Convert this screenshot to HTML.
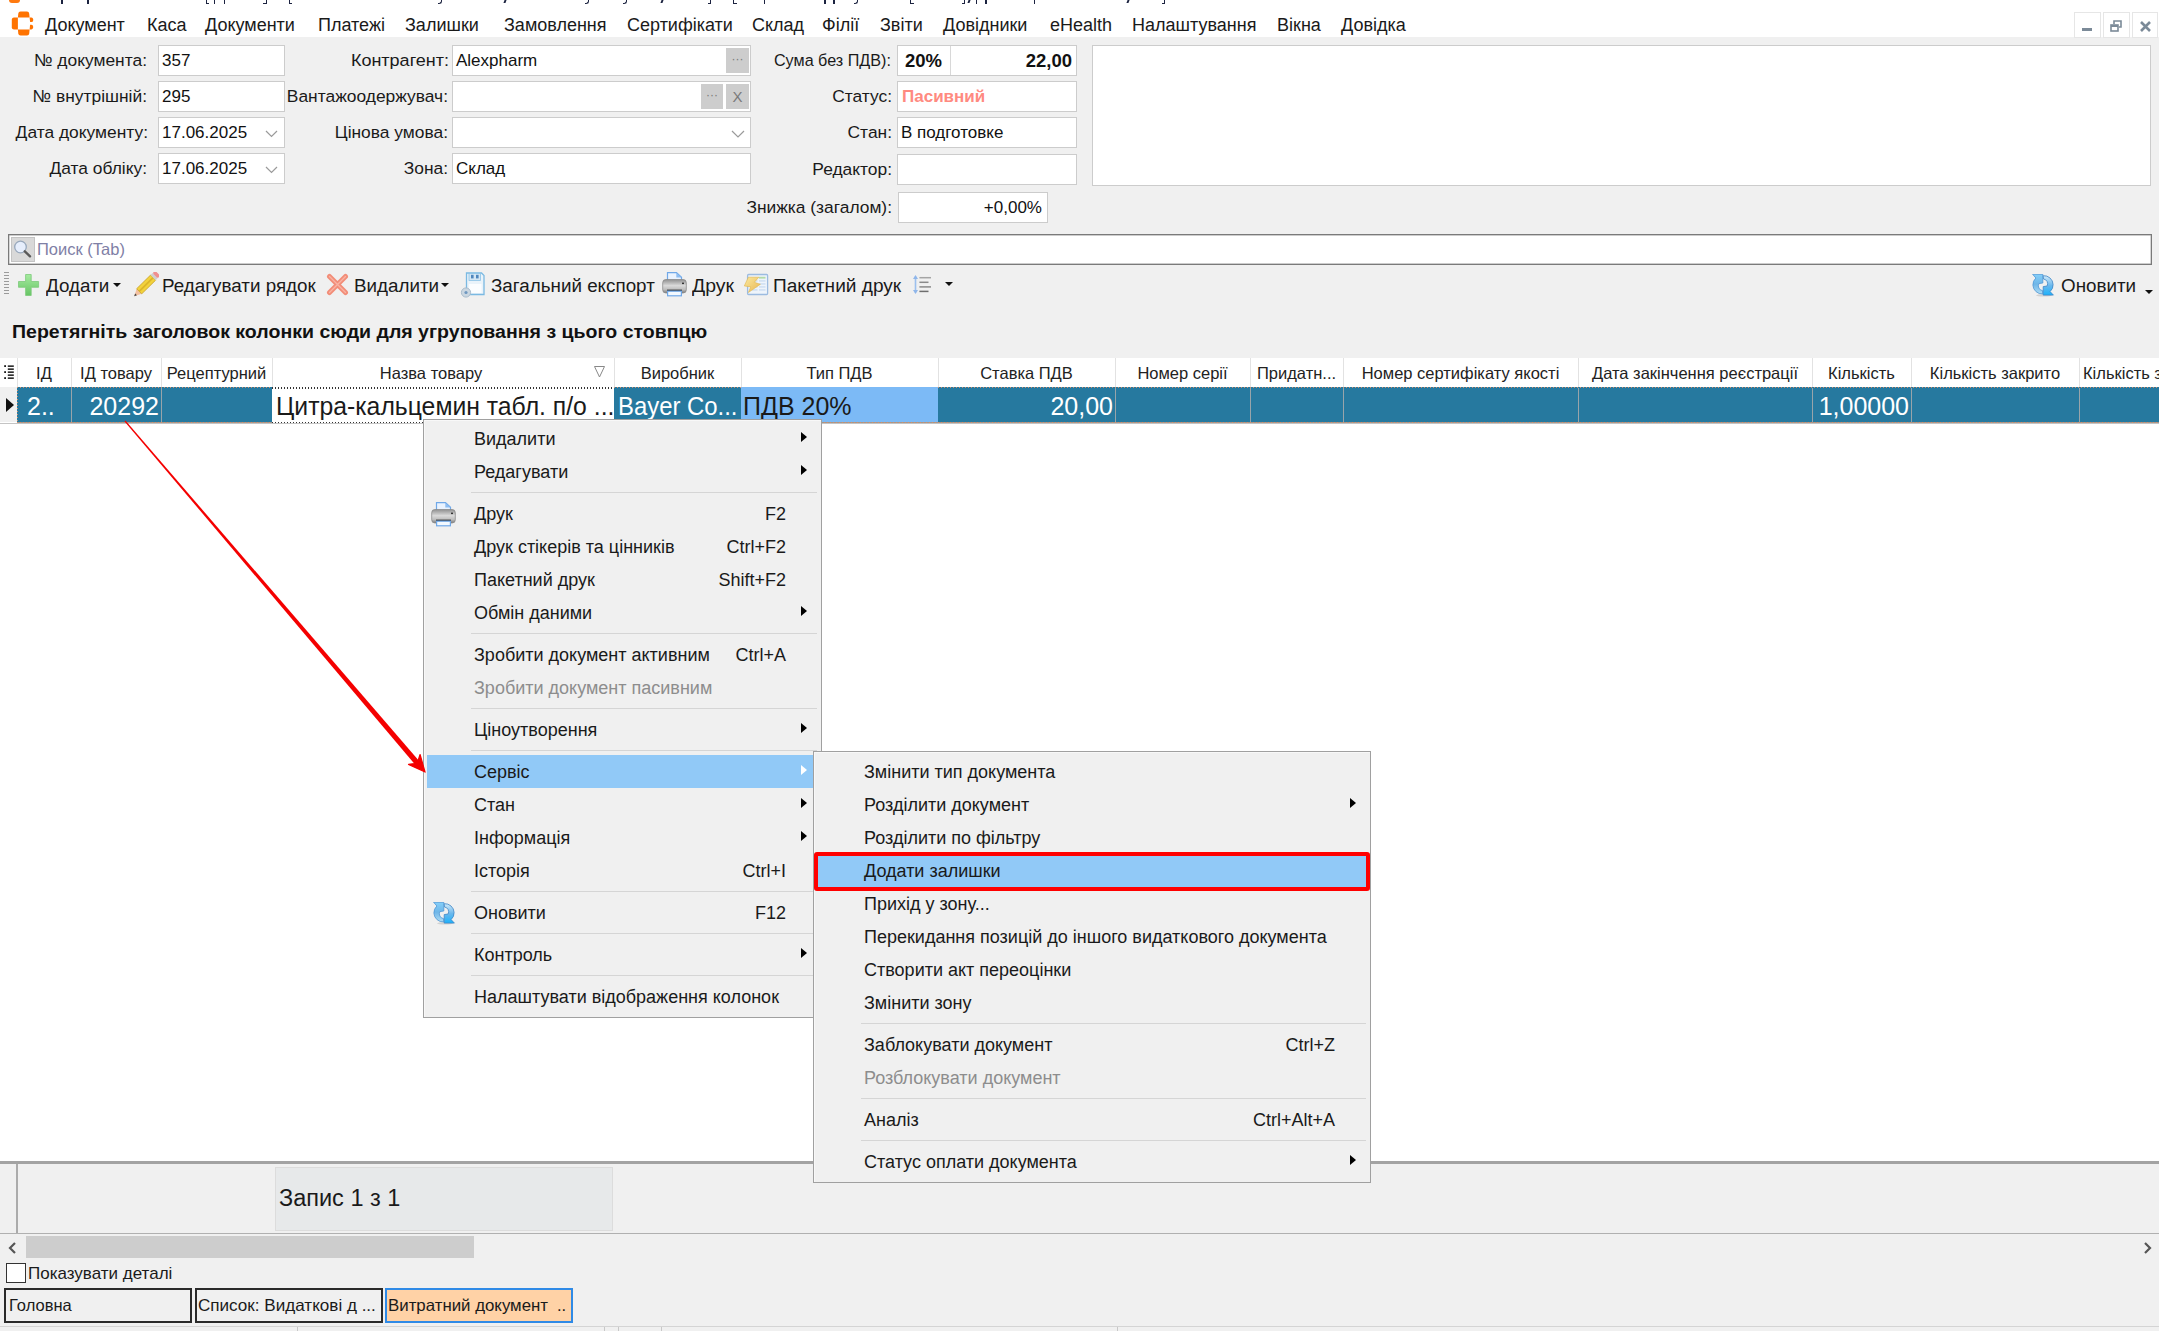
<!DOCTYPE html>
<html><head><meta charset="utf-8">
<style>
*{box-sizing:border-box}
html,body{margin:0;padding:0}
body{width:2159px;height:1331px;overflow:hidden;background:#f0f0f0;font-family:"Liberation Sans",sans-serif;color:#000;position:relative}
.a{position:absolute}
.t{position:absolute;white-space:nowrap}
.mb{font-size:18px;top:9px;line-height:32px;color:#1a1a1a}
.lb{font-size:17.4px;text-align:right;line-height:31px;color:#1a1a1a}
.inp{position:absolute;background:#fff;border:1px solid #cccccc;font-size:17px;line-height:29px;padding-left:3px;white-space:nowrap;color:#111}
.gbtn{position:absolute;background:#cdcdcd;color:#7a7a7a;font-size:12px;text-align:center;line-height:20px}
.tb{font-size:18px;line-height:30px;top:271px;color:#1a1a1a;transform:scaleX(1.045);transform-origin:0 0}
.hd{font-size:16.5px;line-height:28px;top:359px;text-align:center;color:#222}
.cm{font-size:18px;line-height:35px;color:#1a1a1a}
.sc{font-size:18px;line-height:35px;color:#1a1a1a;text-align:right}
.sep{position:absolute;height:1px;background:#d5d5d5}
.arr{position:absolute;width:0;height:0;border-top:5.5px solid transparent;border-bottom:5.5px solid transparent;border-left:6.5px solid #000}
</style></head><body>
<!-- top white bar -->
<div class="a" style="left:0;top:0;width:2159px;height:37px;background:#fff"></div>
<!-- title remnants -->
<div class="a" style="left:9px;top:0;width:11px;height:3px;background:#ff7a10;border-radius:0 0 4px 4px"></div>
<div class="a" style="left:61.0px;top:0;width:1.6px;height:4px;background:#1c2340"></div><div class="a" style="left:87.0px;top:0;width:1.6px;height:4px;background:#1c2340"></div><div class="a" style="left:213.8px;top:0;width:1.6px;height:4px;background:#1c2340"></div><div class="a" style="left:223.5px;top:0;width:1.6px;height:4px;background:#1c2340"></div><div class="a" style="left:763.8px;top:0;width:1.6px;height:4px;background:#1c2340"></div><div class="a" style="left:824.2px;top:0;width:1.6px;height:4px;background:#1c2340"></div><div class="a" style="left:833.2px;top:0;width:1.6px;height:4px;background:#1c2340"></div><div class="a" style="left:975.6px;top:0;width:1.6px;height:4px;background:#1c2340"></div><div class="a" style="left:985.2px;top:0;width:1.6px;height:4px;background:#1c2340"></div><div class="a" style="left:1033.9px;top:0;width:1.6px;height:4px;background:#1c2340"></div><div class="a" style="left:205.5px;top:0;width:3.5px;height:3.5px;border-left:1.5px solid #1c2340;border-bottom:1.5px solid #1c2340"></div><div class="a" style="left:288.9px;top:0;width:3.5px;height:3.5px;border-left:1.5px solid #1c2340;border-bottom:1.5px solid #1c2340"></div><div class="a" style="left:733.3px;top:0;width:3.5px;height:3.5px;border-left:1.5px solid #1c2340;border-bottom:1.5px solid #1c2340"></div><div class="a" style="left:910.4px;top:0;width:3.5px;height:3.5px;border-left:1.5px solid #1c2340;border-bottom:1.5px solid #1c2340"></div><div class="a" style="left:263.2px;top:0;width:3.5px;height:3.5px;border-right:1.5px solid #1c2340;border-bottom:1.5px solid #1c2340"></div><div class="a" style="left:707.5px;top:0;width:3.5px;height:3.5px;border-right:1.5px solid #1c2340;border-bottom:1.5px solid #1c2340"></div><div class="a" style="left:961.8px;top:0;width:3.5px;height:3.5px;border-right:1.5px solid #1c2340;border-bottom:1.5px solid #1c2340"></div><div class="a" style="left:1161.8px;top:0;width:3.5px;height:3.5px;border-right:1.5px solid #1c2340;border-bottom:1.5px solid #1c2340"></div><div class="a" style="left:438.0px;top:0;width:4px;height:3.5px;border-right:1.5px solid #1c2340;border-bottom:1.5px solid #1c2340;border-bottom-right-radius:3px"></div><div class="a" style="left:584.5px;top:0;width:4px;height:3.5px;border-right:1.5px solid #1c2340;border-bottom:1.5px solid #1c2340;border-bottom-right-radius:3px"></div><div class="a" style="left:622.7px;top:0;width:4px;height:3.5px;border-right:1.5px solid #1c2340;border-bottom:1.5px solid #1c2340;border-bottom-right-radius:3px"></div><div class="a" style="left:854.0px;top:0;width:4px;height:3.5px;border-right:1.5px solid #1c2340;border-bottom:1.5px solid #1c2340;border-bottom-right-radius:3px"></div><div class="a" style="left:503.9px;top:0;width:2px;height:3px;background:#1c2340;transform:skewX(-20deg)"></div><div class="a" style="left:660.8px;top:0;width:2px;height:3px;background:#1c2340;transform:skewX(-20deg)"></div><div class="a" style="left:968.4px;top:0;width:2px;height:3px;background:#1c2340;transform:skewX(-20deg)"></div><div class="a" style="left:1126.8px;top:0;width:2px;height:3px;background:#1c2340;transform:skewX(-20deg)"></div>
<!-- logo -->
<svg class="a" style="left:11px;top:11px" width="24" height="26" viewBox="0 0 24 26">
<g fill="#ff7300">
<path d="M6.9 6.4 L7.3 2.4 Q7.5 0.4 9.5 0.4 H16 Q18 0.4 18.2 2.4 L18.6 6.4z"/>
<path d="M6.9 6.4 V18.4 H3 Q0.8 18.4 0.8 16.2 V8.6 Q0.8 6.4 3 6.4z"/>
<path d="M6.9 18.4 L7.3 22.6 Q7.5 24.6 9.5 24.6 H16 Q18 24.6 18.2 22.6 L18.6 18.4z"/>
<path d="M18.6 6.4 H20.4 Q22.1 6.4 22.1 8.2 V9.4 Q22.1 11 20.4 11 H19.1z"/>
<path d="M18.6 18.4 H20.4 Q22.1 18.4 22.1 16.6 V15.4 Q22.1 13.8 20.4 13.8 H19.1z"/>
</g></svg>
<!-- menu bar -->
<div class="t mb" style="left:45px">Документ</div>
<div class="t mb" style="left:147px">Каса</div>
<div class="t mb" style="left:205px">Документи</div>
<div class="t mb" style="left:318px">Платежі</div>
<div class="t mb" style="left:405px">Залишки</div>
<div class="t mb" style="left:504px">Замовлення</div>
<div class="t mb" style="left:627px">Сертифікати</div>
<div class="t mb" style="left:752px">Склад</div>
<div class="t mb" style="left:822px">Філії</div>
<div class="t mb" style="left:880px">Звіти</div>
<div class="t mb" style="left:943px">Довідники</div>
<div class="t mb" style="left:1050px">eHealth</div>
<div class="t mb" style="left:1132px">Налаштування</div>
<div class="t mb" style="left:1277px">Вікна</div>
<div class="t mb" style="left:1341px">Довідка</div>
<!-- MDI buttons -->
<div class="a" style="left:2074px;top:12px;width:27px;height:26px;border:1px solid #e6e6e6;background:#fff"><div class="a" style="left:7px;top:15px;width:10px;height:3px;background:#7b8a98"></div></div>
<div class="a" style="left:2103px;top:12px;width:27px;height:26px;border:1px solid #e6e6e6;background:#fff">
<svg class="a" style="left:6px;top:6px" width="14" height="14" viewBox="0 0 14 14"><g fill="none" stroke="#7b8a98" stroke-width="1.6"><rect x="1" y="6" width="7" height="6"/><path d="M4 5 V2 H11 V8 H9"/></g><rect x="1" y="6" width="7" height="2" fill="#7b8a98"/></svg></div>
<div class="a" style="left:2132px;top:12px;width:26px;height:26px;border:1px solid #e6e6e6;background:#fff">
<svg class="a" style="left:6px;top:7px" width="13" height="13" viewBox="0 0 13 13"><path d="M2 2 L11 11 M11 2 L2 11" stroke="#7b8a98" stroke-width="2.6"/></svg></div>
<!-- FORM col1 -->
<div class="t lb" style="left:0;width:147px;top:45px">№ документа:</div>
<div class="t lb" style="left:0;width:147px;top:81px">№ внутрішній:</div>
<div class="t lb" style="left:0;width:148px;top:117px">Дата документу:</div>
<div class="t lb" style="left:0;width:147px;top:153px">Дата обліку:</div>
<div class="inp" style="left:158px;top:45px;width:127px;height:31px">357</div>
<div class="inp" style="left:158px;top:81px;width:127px;height:31px">295</div>
<div class="inp" style="left:158px;top:117px;width:127px;height:31px">17.06.2025<svg class="a" style="left:106px;top:12px" width="13" height="8" viewBox="0 0 13 8"><path d="M1 1 L6.5 6.5 L12 1" fill="none" stroke="#9a9a9a" stroke-width="1.2"/></svg></div>
<div class="inp" style="left:158px;top:153px;width:127px;height:31px">17.06.2025<svg class="a" style="left:106px;top:12px" width="13" height="8" viewBox="0 0 13 8"><path d="M1 1 L6.5 6.5 L12 1" fill="none" stroke="#9a9a9a" stroke-width="1.2"/></svg></div>
<!-- col2 -->
<div class="t lb" style="left:200px;width:249px;top:45px;transform:scaleX(1.035);transform-origin:100% 0">Контрагент:</div>
<div class="t lb" style="left:200px;width:248px;top:81px">Вантажоодержувач:</div>
<div class="t lb" style="left:200px;width:248px;top:117px">Цінова умова:</div>
<div class="t lb" style="left:200px;width:248px;top:153px">Зона:</div>
<div class="inp" style="left:452px;top:45px;width:299px;height:31px">Alexpharm<div class="gbtn" style="left:273px;top:2px;width:23px;height:25px;line-height:22px">···</div></div>
<div class="inp" style="left:452px;top:81px;width:299px;height:31px"><div class="gbtn" style="left:248px;top:2px;width:22px;height:25px;line-height:22px">···</div><div class="gbtn" style="left:273px;top:2px;width:23px;height:25px;line-height:25px;font-size:15px">X</div></div>
<div class="inp" style="left:452px;top:117px;width:299px;height:31px"><svg class="a" style="left:278px;top:12px" width="14" height="8" viewBox="0 0 14 8"><path d="M1 1 L7 7 L13 1" fill="none" stroke="#9a9a9a" stroke-width="1.2"/></svg></div>
<div class="inp" style="left:452px;top:153px;width:299px;height:31px">Склад</div>
<!-- col3 -->
<div class="t lb" style="left:650px;width:241px;top:45px;transform:scaleX(0.93);transform-origin:100% 0">Сума без ПДВ):</div>
<div class="t lb" style="left:650px;width:242px;top:81px">Статус:</div>
<div class="t lb" style="left:650px;width:242px;top:117px">Стан:</div>
<div class="t lb" style="left:650px;width:242px;top:154px">Редактор:</div>
<div class="t lb" style="left:650px;width:242px;top:192px">Знижка (загалом):</div>
<div class="inp" style="left:897px;top:45px;width:180px;height:31px;font-weight:bold;padding-left:7px;font-size:18.5px">20%<div class="a" style="left:52px;top:0;width:1px;height:29px;background:#d8d8d8"></div><div class="t" style="right:4px;top:0">22,00</div></div>
<div class="inp" style="left:897px;top:81px;width:180px;height:31px;font-weight:bold;color:#ff8a80;padding-left:4px">Пасивний</div>
<div class="inp" style="left:897px;top:117px;width:180px;height:31px">В подготовке</div>
<div class="inp" style="left:897px;top:154px;width:180px;height:31px"></div>
<div class="inp" style="left:898px;top:192px;width:150px;height:31px;text-align:right;padding-right:5px">+0,00%</div>
<div class="inp" style="left:1092px;top:45px;width:1059px;height:141px"></div>
<!-- search -->
<div class="a" style="left:8px;top:234px;width:2144px;height:31px;background:#fff;border:1px solid #7a7a7a;box-shadow:inset 0 0 0 0.4px #9a9a9a"></div>
<div class="a" style="left:11px;top:237px;width:24px;height:25px;background:#d9d9d9;border:1px solid #c4c4c4">
<svg class="a" style="left:2px;top:2px" width="20" height="20" viewBox="0 0 20 20"><circle cx="6.5" cy="7" r="5.8" fill="#e6eefc" stroke="#98a8bc" stroke-width="1.3"/><path d="M10.8 11.3 L16 16.3" stroke="#5a5a5a" stroke-width="2.4" stroke-linecap="round"/></svg></div>
<div class="t" style="left:37px;top:234px;line-height:30px;font-size:16.5px;color:#7f80a6">Поиск (Tab)</div>
<!-- toolbar -->
<div class="a" style="left:4px;top:272px;width:5px;height:23px;background:repeating-linear-gradient(#9a9a9a 0 1.2px,transparent 1.2px 2.95px)"></div>
<svg class="a" style="left:18px;top:274px" width="22" height="22" viewBox="0 0 22 22"><defs><linearGradient id="gp" x1="0" y1="0" x2="0" y2="1"><stop offset="0" stop-color="#a6eba0"/><stop offset="1" stop-color="#66c464"/></linearGradient></defs><path d="M7.6 0.5 h5.6 v7 h7.4 v5.8 h-7.4 v8.2 h-5.6 v-8.2 h-7.1 v-5.8 h7.1z" fill="url(#gp)" stroke="#7cc97a" stroke-width="0.8"/></svg>
<div class="t tb" style="left:46px">Додати</div>
<div class="arr" style="left:113px;top:283px;border-left:4px solid transparent;border-right:4px solid transparent;border-top:4px solid #111;border-bottom:0"></div>
<svg class="a" style="left:133px;top:272px" width="26" height="26" viewBox="0 0 26 26"><g transform="translate(1.2,24.2) rotate(-44.5)"><path d="M0 0 L7 -3.6 L7 3.6z" fill="#f3c0a0"/><path d="M0 0 L2.6 -1.3 L2.6 1.3z" fill="#444"/><rect x="7" y="-3.6" width="19.5" height="7.2" fill="#f2d23c" stroke="#c29a1c" stroke-width="0.7"/><rect x="7" y="-0.9" width="19.5" height="1.8" fill="#dcb52a"/><rect x="26.5" y="-3.6" width="2.8" height="7.2" fill="#cfcfcf"/><rect x="29.3" y="-3.6" width="3.6" height="7.2" rx="1.5" fill="#ef8f8f"/></g></svg>
<div class="t tb" style="left:162px">Редагувати рядок</div>
<svg class="a" style="left:326px;top:273px" width="23" height="23" viewBox="0 0 23 23"><path d="M3.5 3.5 L19.5 19.5 M19.5 3.5 L3.5 19.5" stroke="#f28d78" stroke-width="5" stroke-linecap="round"/><path d="M3.5 3.5 L19.5 19.5 M19.5 3.5 L3.5 19.5" stroke="#f9b3a3" stroke-width="1.4" stroke-linecap="round"/></svg>
<div class="t tb" style="left:354px">Видалити</div>
<div class="arr" style="left:441px;top:283px;border-left:4px solid transparent;border-right:4px solid transparent;border-top:4px solid #111;border-bottom:0"></div>
<svg class="a" style="left:460px;top:271px" width="26" height="27" viewBox="0 0 26 27"><path d="M6.5 2 H21.5 L24 4.5 V23.5 H6.5z" fill="#eaf3fa" stroke="#7ab9e2" stroke-width="1.3"/><rect x="9" y="2.5" width="11.5" height="7" fill="#d3e6f4" stroke="#8cc2e6" stroke-width="0.8"/><rect x="11" y="3.8" width="2.6" height="3.6" fill="#4f86bd"/><rect x="16" y="3.8" width="2.6" height="3.6" fill="#4f86bd"/><rect x="9" y="13" width="12.5" height="9" fill="#fbfdff"/><circle cx="6" cy="21.5" r="4.6" fill="#cbd7e1" stroke="#a9bccc" stroke-width="1"/><circle cx="6" cy="21.5" r="1.6" fill="#6f98c0"/></svg>
<div class="t tb" style="left:491px">Загальний експорт</div>
<svg class="a" style="left:662px;top:272px" width="25" height="25" viewBox="0 0 25 25"><defs><linearGradient id="pg662" x1="0" y1="0" x2="0" y2="1"><stop offset="0" stop-color="#8f8f8f"/><stop offset="0.45" stop-color="#dadada"/><stop offset="0.75" stop-color="#bdbdbd"/><stop offset="1" stop-color="#7a7a7a"/></linearGradient></defs><path d="M5.5 0.7 H14.5 L19.5 5.2 V8.5 H5.5z" fill="#eaf3ff" stroke="#70a8e8" stroke-width="1.2"/><path d="M14.3 0.7 V5.4 H19.5z" fill="#8ebef2"/><rect x="0.7" y="7.5" width="23.6" height="13.5" rx="3.2" fill="url(#pg662)" stroke="#8c8c8c" stroke-width="0.8"/><rect x="20" y="10.6" width="2" height="1.5" fill="#333"/><rect x="5" y="17.6" width="15" height="1.8" fill="#3a3a3a"/><rect x="5.6" y="19.2" width="13.8" height="4.6" fill="#f3f9ff" stroke="#70a8e8" stroke-width="1.2"/></svg>
<div class="t tb" style="left:692px;transform:scaleX(1.08)">Друк</div>
<svg class="a" style="left:744px;top:272px" width="26" height="25" viewBox="0 0 26 25"><defs><linearGradient id="bolt" x1="0" y1="0" x2="1" y2="1"><stop offset="0" stop-color="#faeaa0"/><stop offset="1" stop-color="#e9b552"/></linearGradient></defs><rect x="3.6" y="2.5" width="20" height="20" rx="1" fill="#eef4fb" stroke="#9cbbe0" stroke-width="1.3"/><rect x="15" y="4.8" width="6.5" height="1.8" fill="#b3dba8"/><g fill="#d3e2f3"><rect x="8" y="8" width="5.5" height="1.8"/><rect x="15" y="8" width="6.5" height="1.8"/><rect x="8" y="11" width="5.5" height="1.8"/><rect x="15" y="11" width="6.5" height="1.8"/><rect x="8" y="14" width="5.5" height="1.8"/><rect x="15" y="14" width="6.5" height="1.8"/><rect x="8" y="17" width="5.5" height="1.8"/><rect x="15" y="17" width="6.5" height="1.8"/></g><path d="M4.4 5.2 L14.9 5.2 L10.3 10.3 L16.4 12.3 L4.4 20.5 L6.7 14.9 L0.3 13.9z" fill="url(#bolt)" stroke="#e2b648" stroke-width="0.6" stroke-linejoin="round"/></svg>
<div class="t tb" style="left:773px;transform:scaleX(1.06)">Пакетний друк</div>
<svg class="a" style="left:912px;top:274px" width="22" height="22" viewBox="0 0 22 22"><path d="M3.5 2.5 V18.5" stroke="#9cc0ee" stroke-width="1.6"/><path d="M1 5 L3.5 1 L6 5z M1 16 L3.5 20 L6 16z" fill="#8fb6ea"/><g stroke-width="1.5"><path d="M7.4 3.7 H19" stroke="#a4a4a4"/><path d="M7.4 8.3 H16.5" stroke="#8a8a8a"/><path d="M7.4 12.9 H19" stroke="#8a8a8a"/><path d="M7.4 17.4 H16.5" stroke="#6e6e6e"/></g></svg>
<div class="arr" style="left:945px;top:282px;border-left:4px solid transparent;border-right:4px solid transparent;border-top:4px solid #111;border-bottom:0"></div>
<svg class="a" style="left:2032px;top:274px" width="23" height="23" viewBox="0 0 23 23"><defs><linearGradient id="rl2032" x1="0" y1="0" x2="0" y2="1"><stop offset="0" stop-color="#84cff9"/><stop offset="0.5" stop-color="#6fb6e8"/><stop offset="1" stop-color="#aedcf4"/></linearGradient><linearGradient id="rr2032" x1="0" y1="0" x2="0" y2="1"><stop offset="0" stop-color="#d2ebfa"/><stop offset="0.5" stop-color="#6cb8ec"/><stop offset="1" stop-color="#1cb2fb"/></linearGradient></defs><ellipse cx="12" cy="21.3" rx="8" ry="1.3" fill="#000" opacity="0.12"/><path d="M0.6 0.3 H10.8 V9 L6.9 9.6 A4.8 4.8 0 0 0 10.5 16.6 L10.8 19.9 A9.2 9.2 0 0 1 0.9 11.1 A9.2 9.2 0 0 1 3.9 4 Z" fill="url(#rl2032)" stroke="#4f97d6" stroke-width="0.8" stroke-linejoin="round"/><path d="M21.4 21.1 H11.2 V12.6 L15.1 12 A4.8 4.8 0 0 0 11.5 5 L11.2 1.7 A9.2 9.2 0 0 1 21.1 10.5 A9.2 9.2 0 0 1 18.1 17.6 Z" fill="url(#rr2032)" stroke="#3f87c6" stroke-width="0.8" stroke-linejoin="round"/></svg>
<div class="t tb" style="left:2061px">Оновити</div>
<div class="arr" style="left:2145px;top:290px;border-left:4px solid transparent;border-right:4px solid transparent;border-top:4px solid #111;border-bottom:0"></div>
<!-- group panel text -->
<div class="t" style="left:12px;top:318px;line-height:28px;font-size:18px;font-weight:bold;color:#111;transform:scaleX(1.085);transform-origin:0 0">Перетягніть заголовок колонки сюди для угруповання з цього стовпцю</div>
<!-- GRID -->
<div class="a" style="left:0;top:358px;width:2159px;height:803px;background:#fff"></div>
<div class="a" style="left:0;top:358px;width:17px;height:29px;background:#fff"></div>
<svg class="a" style="left:3px;top:364px" width="12" height="16" viewBox="0 0 12 16"><g fill="#1a1a1a"><rect x="1.2" y="1.2" width="1.8" height="1.8"/><rect x="1.2" y="7.2" width="1.8" height="1.8"/><rect x="1.2" y="13.2" width="1.8" height="1.8"/><rect x="4.8" y="1.4" width="6" height="1.5"/><rect x="4.8" y="4.4" width="6" height="1.5"/><rect x="4.8" y="7.4" width="6" height="1.5"/><rect x="4.8" y="10.4" width="6" height="1.5"/><rect x="4.8" y="13.4" width="6" height="1.5"/></g></svg>
<!-- header separators -->
<div class="a" style="left:17px;top:358px;width:1px;height:29px;background:#e2e2e2"></div>
<div class="a" style="left:71px;top:358px;width:1px;height:29px;background:#e2e2e2"></div>
<div class="a" style="left:161px;top:358px;width:1px;height:29px;background:#e2e2e2"></div>
<div class="a" style="left:272px;top:358px;width:1px;height:29px;background:#e2e2e2"></div>
<div class="a" style="left:614px;top:358px;width:1px;height:29px;background:#e2e2e2"></div>
<div class="a" style="left:741px;top:358px;width:1px;height:29px;background:#e2e2e2"></div>
<div class="a" style="left:938px;top:358px;width:1px;height:29px;background:#e2e2e2"></div>
<div class="a" style="left:1115px;top:358px;width:1px;height:29px;background:#e2e2e2"></div>
<div class="a" style="left:1250px;top:358px;width:1px;height:29px;background:#e2e2e2"></div>
<div class="a" style="left:1343px;top:358px;width:1px;height:29px;background:#e2e2e2"></div>
<div class="a" style="left:1578px;top:358px;width:1px;height:29px;background:#e2e2e2"></div>
<div class="a" style="left:1812px;top:358px;width:1px;height:29px;background:#e2e2e2"></div>
<div class="a" style="left:1911px;top:358px;width:1px;height:29px;background:#e2e2e2"></div>
<div class="a" style="left:2079px;top:358px;width:1px;height:29px;background:#e2e2e2"></div>
<div class="t hd" style="left:17px;width:54px">ІД</div>
<div class="t hd" style="left:71px;width:90px">ІД товару</div>
<div class="t hd" style="left:161px;width:111px">Рецептурний</div>
<div class="t hd" style="left:272px;width:318px">Назва товару</div>
<svg class="a" style="left:594px;top:366px" width="11" height="12" viewBox="0 0 11 12"><path d="M0.5 0.5 H10.5 L5.5 11z" fill="none" stroke="#888" stroke-width="1"/></svg>
<div class="t hd" style="left:614px;width:127px">Виробник</div>
<div class="t hd" style="left:741px;width:197px">Тип ПДВ</div>
<div class="t hd" style="left:938px;width:177px">Ставка ПДВ</div>
<div class="t hd" style="left:1115px;width:135px">Номер серії</div>
<div class="t hd" style="left:1250px;width:93px">Придатн...</div>
<div class="t hd" style="left:1343px;width:235px">Номер сертифікату якості</div>
<div class="t hd" style="left:1578px;width:234px">Дата закінчення реєстрації</div>
<div class="t hd" style="left:1812px;width:99px">Кількість</div>
<div class="t hd" style="left:1911px;width:168px">Кількість закрито</div>
<div class="t hd" style="left:2083px;text-align:left">Кількість з</div>
<!-- row -->
<div class="a" style="left:0;top:387px;width:17px;height:35px;background:#f0f0f0"></div>
<div class="a" style="left:6px;top:398px;width:0;height:0;border-top:7px solid transparent;border-bottom:7px solid transparent;border-left:8px solid #111"></div>
<div class="a" style="left:17px;top:387px;width:2142px;height:35px;background:#26799f"></div><div class="a" style="left:17px;top:387px;width:1px;height:35px;background:repeating-linear-gradient(#d68f6a 0 1.4px,transparent 1.4px 3px)"></div>
<div class="a" style="left:17px;top:387px;width:2142px;height:1px;background:repeating-linear-gradient(90deg,#d68f6a 0 1.4px,transparent 1.4px 3px)"></div>
<div class="a" style="left:17px;top:422px;width:2142px;height:1px;background:repeating-linear-gradient(90deg,#d68f6a 0 1.4px,#a09890 1.4px 3px)"></div>
<div class="a" style="left:71px;top:388px;width:1px;height:34px;background:#98a4aa"></div>
<div class="a" style="left:161px;top:388px;width:1px;height:34px;background:#98a4aa"></div>
<div class="a" style="left:1115px;top:388px;width:1px;height:34px;background:#98a4aa"></div>
<div class="a" style="left:1250px;top:388px;width:1px;height:34px;background:#98a4aa"></div>
<div class="a" style="left:1343px;top:388px;width:1px;height:34px;background:#98a4aa"></div>
<div class="a" style="left:1578px;top:388px;width:1px;height:34px;background:#98a4aa"></div>
<div class="a" style="left:1812px;top:388px;width:1px;height:34px;background:#98a4aa"></div>
<div class="a" style="left:1911px;top:388px;width:1px;height:34px;background:#98a4aa"></div>
<div class="a" style="left:2079px;top:388px;width:1px;height:34px;background:#98a4aa"></div>
<div class="a" style="left:272px;top:387px;width:342px;height:36px;background:#fff"></div><div class="a" style="left:272px;top:387px;width:342px;height:1.5px;background:repeating-linear-gradient(90deg,#333 0 1.5px,transparent 1.5px 3px)"></div><div class="a" style="left:272px;top:421.5px;width:342px;height:1.5px;background:repeating-linear-gradient(90deg,#333 0 1.5px,transparent 1.5px 3px)"></div>
<div class="a" style="left:741px;top:387px;width:197px;height:35px;background:#7cbaf6"></div>
<div class="t" style="left:27px;top:389px;line-height:35px;font-size:25px;color:#fff">2..</div>
<div class="t" style="left:71px;width:88px;text-align:right;top:389px;line-height:35px;font-size:25px;color:#fff">20292</div>
<div class="t" style="left:276px;top:389px;line-height:35px;font-size:25px;color:#1a1a1a;transform:scaleX(0.99);transform-origin:0 0">Цитра-кальцемин табл. п/о ...</div>
<div class="t" style="left:618px;top:389px;line-height:35px;font-size:25px;color:#fff;transform:scaleX(0.955);transform-origin:0 0">Bayer Co...</div>
<div class="t" style="left:743px;top:389px;line-height:35px;font-size:25px;color:#1a1a1a">ПДВ 20%</div>
<div class="t" style="left:938px;width:175px;text-align:right;top:389px;line-height:35px;font-size:25px;color:#fff">20,00</div>
<div class="t" style="left:1812px;width:97px;text-align:right;top:389px;line-height:35px;font-size:25px;color:#fff">1,00000</div>
<div class="a" style="left:0;top:423px;width:2159px;height:1px;background:#c4c4c4"></div>
<!-- arrow -->

<!-- FOOTER -->
<div class="a" style="left:0;top:1161px;width:2159px;height:3px;background:#a3a3a3"></div>
<div class="a" style="left:0;top:1164px;width:2159px;height:69px;background:#f0f0f0"></div>
<div class="a" style="left:16px;top:1164px;width:2px;height:69px;background:#ababab"></div>
<div class="a" style="left:275px;top:1167px;width:338px;height:64px;background:#e7e9ea;border:1px solid #dcdcdc"></div>
<div class="t" style="left:279px;top:1167px;line-height:62px;font-size:23.5px;color:#1a1a1a">Запис 1 з 1</div>
<div class="a" style="left:0;top:1233px;width:2159px;height:1px;background:#b0b0b0"></div>
<svg class="a" style="left:7px;top:1242px" width="10" height="12" viewBox="0 0 10 12"><path d="M8 1 L3 6 L8 11" fill="none" stroke="#555" stroke-width="2.2"/></svg>
<div class="a" style="left:26px;top:1236px;width:448px;height:22px;background:#cdcdcd"></div>
<svg class="a" style="left:2143px;top:1242px" width="10" height="12" viewBox="0 0 10 12"><path d="M2 1 L7 6 L2 11" fill="none" stroke="#555" stroke-width="2.2"/></svg>
<div class="a" style="left:6px;top:1263px;width:20px;height:20px;background:#fff;border:1.5px solid #333"></div>
<div class="t" style="left:28px;top:1262px;line-height:23px;font-size:17px;color:#1a1a1a">Показувати деталі</div>
<div class="a" style="left:4px;top:1288px;width:188px;height:35px;background:#f0f0f0;border:2px solid #2a2a2a"></div>
<div class="t" style="left:9px;top:1288px;line-height:34px;font-size:16.5px;color:#1a1a1a">Головна</div>
<div class="a" style="left:195px;top:1288px;width:188px;height:35px;background:#f0f0f0;border:2px solid #2a2a2a"></div>
<div class="t" style="left:198px;top:1288px;line-height:34px;font-size:16.5px;color:#1a1a1a;transform:scaleX(1.035);transform-origin:0 0">Список: Видаткові д ...</div>
<div class="a" style="left:385px;top:1288px;width:188px;height:35px;background:#ffd2a6;border:2px solid #2f8ae6"></div>
<div class="t" style="left:388px;top:1288px;line-height:34px;font-size:16.5px;color:#1a1a1a;transform:scaleX(1.02);transform-origin:0 0">Витратний документ</div><div class="t" style="left:557px;top:1288px;line-height:34px;font-size:16.5px;color:#1a1a1a">..</div>
<div class="a" style="left:0;top:1326px;width:2159px;height:1px;background:#d4d4d4"></div>

<div class="a" style="left:297px;top:1327px;width:1px;height:4px;background:#c8c8c8"></div><div class="a" style="left:604px;top:1327px;width:1px;height:4px;background:#c8c8c8"></div><div class="a" style="left:618px;top:1327px;width:1px;height:4px;background:#c8c8c8"></div><div class="a" style="left:661px;top:1327px;width:1px;height:4px;background:#c8c8c8"></div><div class="a" style="left:1117px;top:1327px;width:1px;height:4px;background:#c8c8c8"></div>
<!-- CONTEXT MENU -->
<div class="a" style="left:423px;top:419px;width:399px;height:599px;background:#f0f0f0;border:1px solid #a0a0a0;box-shadow:inset 1px 1px 0 #f8f8f8"></div>
<div class="sep" style="left:471px;top:492px;width:346px"></div>
<div class="sep" style="left:471px;top:633px;width:346px"></div>
<div class="sep" style="left:471px;top:708px;width:346px"></div>
<div class="sep" style="left:471px;top:750px;width:346px"></div>
<div class="sep" style="left:471px;top:891px;width:346px"></div>
<div class="sep" style="left:471px;top:933px;width:346px"></div>
<div class="sep" style="left:471px;top:975px;width:346px"></div>
<div class="a" style="left:427px;top:755px;width:387px;height:33px;background:#91c9f7"></div>
<div class="t cm" style="left:474px;top:422px">Видалити</div>
<div class="t cm" style="left:474px;top:455px">Редагувати</div>
<div class="t cm" style="left:474px;top:497px">Друк</div>
<div class="t cm" style="left:474px;top:530px">Друк стікерів та цінників</div>
<div class="t cm" style="left:474px;top:563px">Пакетний друк</div>
<div class="t cm" style="left:474px;top:596px">Обмін даними</div>
<div class="t cm" style="left:474px;top:638px">Зробити документ активним</div>
<div class="t cm" style="left:474px;top:671px;color:#8d8d8d">Зробити документ пасивним</div>
<div class="t cm" style="left:474px;top:713px">Ціноутворення</div>
<div class="t cm" style="left:474px;top:755px">Сервіс</div>
<div class="t cm" style="left:474px;top:788px">Стан</div>
<div class="t cm" style="left:474px;top:821px">Інформація</div>
<div class="t cm" style="left:474px;top:854px">Історія</div>
<div class="t cm" style="left:474px;top:896px">Оновити</div>
<div class="t cm" style="left:474px;top:938px">Контроль</div>
<div class="t cm" style="left:474px;top:980px">Налаштувати відображення колонок</div>
<div class="t sc" style="left:600px;width:186px;top:497px">F2</div>
<div class="t sc" style="left:600px;width:186px;top:530px">Ctrl+F2</div>
<div class="t sc" style="left:600px;width:186px;top:563px">Shift+F2</div>
<div class="t sc" style="left:600px;width:186px;top:638px">Ctrl+A</div>
<div class="t sc" style="left:600px;width:186px;top:854px">Ctrl+I</div>
<div class="t sc" style="left:600px;width:186px;top:896px">F12</div>
<div class="arr" style="left:801px;top:432px"></div>
<div class="arr" style="left:801px;top:465px"></div>
<div class="arr" style="left:801px;top:606px"></div>
<div class="arr" style="left:801px;top:723px"></div>
<div class="arr" style="left:801px;top:765px;border-left-color:#fff"></div>
<div class="arr" style="left:801px;top:798px"></div>
<div class="arr" style="left:801px;top:831px"></div>
<div class="arr" style="left:801px;top:948px"></div>
<svg class="a" style="left:431px;top:502px" width="25" height="25" viewBox="0 0 25 25"><defs><linearGradient id="pg431" x1="0" y1="0" x2="0" y2="1"><stop offset="0" stop-color="#8f8f8f"/><stop offset="0.45" stop-color="#dadada"/><stop offset="0.75" stop-color="#bdbdbd"/><stop offset="1" stop-color="#7a7a7a"/></linearGradient></defs><path d="M5.5 0.7 H14.5 L19.5 5.2 V8.5 H5.5z" fill="#eaf3ff" stroke="#70a8e8" stroke-width="1.2"/><path d="M14.3 0.7 V5.4 H19.5z" fill="#8ebef2"/><rect x="0.7" y="7.5" width="23.6" height="13.5" rx="3.2" fill="url(#pg431)" stroke="#8c8c8c" stroke-width="0.8"/><rect x="20" y="10.6" width="2" height="1.5" fill="#333"/><rect x="5" y="17.6" width="15" height="1.8" fill="#3a3a3a"/><rect x="5.6" y="19.2" width="13.8" height="4.6" fill="#f3f9ff" stroke="#70a8e8" stroke-width="1.2"/></svg>
<svg class="a" style="left:433px;top:902px" width="23" height="23" viewBox="0 0 23 23"><defs><linearGradient id="rl433" x1="0" y1="0" x2="0" y2="1"><stop offset="0" stop-color="#84cff9"/><stop offset="0.5" stop-color="#6fb6e8"/><stop offset="1" stop-color="#aedcf4"/></linearGradient><linearGradient id="rr433" x1="0" y1="0" x2="0" y2="1"><stop offset="0" stop-color="#d2ebfa"/><stop offset="0.5" stop-color="#6cb8ec"/><stop offset="1" stop-color="#1cb2fb"/></linearGradient></defs><ellipse cx="12" cy="21.3" rx="8" ry="1.3" fill="#000" opacity="0.12"/><path d="M0.6 0.3 H10.8 V9 L6.9 9.6 A4.8 4.8 0 0 0 10.5 16.6 L10.8 19.9 A9.2 9.2 0 0 1 0.9 11.1 A9.2 9.2 0 0 1 3.9 4 Z" fill="url(#rl433)" stroke="#4f97d6" stroke-width="0.8" stroke-linejoin="round"/><path d="M21.4 21.1 H11.2 V12.6 L15.1 12 A4.8 4.8 0 0 0 11.5 5 L11.2 1.7 A9.2 9.2 0 0 1 21.1 10.5 A9.2 9.2 0 0 1 18.1 17.6 Z" fill="url(#rr433)" stroke="#3f87c6" stroke-width="0.8" stroke-linejoin="round"/></svg>
<!-- SUBMENU -->
<div class="a" style="left:813px;top:751px;width:558px;height:432px;background:#f0f0f0;border:1px solid #a0a0a0;box-shadow:inset 1px 1px 0 #f8f8f8"></div>
<div class="sep" style="left:861px;top:1023px;width:505px"></div>
<div class="sep" style="left:861px;top:1098px;width:505px"></div>
<div class="sep" style="left:861px;top:1140px;width:505px"></div>
<div class="a" style="left:814px;top:852px;width:556px;height:39px;background:#91c9f7;border:4px solid #ff0000;border-radius:3px"></div>
<div class="t cm" style="left:864px;top:755px">Змінити тип документа</div>
<div class="t cm" style="left:864px;top:788px">Розділити документ</div>
<div class="t cm" style="left:864px;top:821px">Розділити по фільтру</div>
<div class="t cm" style="left:864px;top:854px">Додати залишки</div>
<div class="t cm" style="left:864px;top:887px">Прихід у зону...</div>
<div class="t cm" style="left:864px;top:920px">Перекидання позицій до іншого видаткового документа</div>
<div class="t cm" style="left:864px;top:953px">Створити акт переоцінки</div>
<div class="t cm" style="left:864px;top:986px">Змінити зону</div>
<div class="t cm" style="left:864px;top:1028px">Заблокувати документ</div>
<div class="t cm" style="left:864px;top:1061px;color:#8d8d8d">Розблокувати документ</div>
<div class="t cm" style="left:864px;top:1103px">Аналіз</div>
<div class="t cm" style="left:864px;top:1145px">Статус оплати документа</div>
<div class="t sc" style="left:1100px;width:235px;top:1028px">Ctrl+Z</div>
<div class="t sc" style="left:1100px;width:235px;top:1103px">Ctrl+Alt+A</div>
<div class="arr" style="left:1350px;top:798px"></div>
<div class="arr" style="left:1350px;top:1155px"></div>
<svg class="a" style="left:0;top:0" width="2159" height="1331" viewBox="0 0 2159 1331">
<path d="M124.54 421.39 L414.38 763.70 L418.49 760.20 L125.46 420.61z" fill="#f40000"/>
<path d="M425.08 772.06 L408.51 764.38 L414.19 763.48 L418.29 759.97 L420.07 754.50z" fill="#f40000" stroke="#f40000" stroke-width="1.2" stroke-linejoin="round"/>
</svg>
</body></html>
